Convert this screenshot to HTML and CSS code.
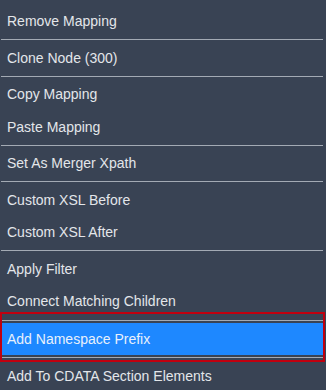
FILE: index.html
```html
<!DOCTYPE html>
<html>
<head>
<meta charset="utf-8">
<link rel="stylesheet" href="styles.css">
</head>
<body>
<ul class="menu">
  <li class="item">Remove Mapping</li>
  <li class="sep"></li>
  <li class="item">Clone Node (300)</li>
  <li class="sep"></li>
  <li class="item">Copy Mapping</li>
  <li class="item">Paste Mapping</li>
  <li class="sep"></li>
  <li class="item">Set As Merger Xpath</li>
  <li class="sep"></li>
  <li class="item">Custom XSL Before</li>
  <li class="item">Custom XSL After</li>
  <li class="sep"></li>
  <li class="item">Apply Filter</li>
  <li class="item">Connect Matching Children</li>
  <li class="sep sep-focus"></li>
  <li class="item active">Add Namespace Prefix<span class="focus-ring"></span></li>
  <li class="sep sep-focus"></li>
  <li class="item">Add To CDATA Section Elements</li>
</ul>
</body>
</html>
```
FILE: styles.css
```css
html, body {
  margin: 0;
  padding: 0;
  background: #394354;
  width: 326px;
  height: 390px;
  overflow: hidden;
}
.menu {
  list-style: none;
  margin: 0;
  padding: 5px 3px 0 1px;
  font-family: "Liberation Sans", Arial, sans-serif;
  font-size: 14px;
  color: #e3e6ea;
}
.item {
  position: relative;
  height: 32.5px;
  line-height: 32.5px;
  padding-left: 6px;
  white-space: nowrap;
}
.sep {
  height: 1px;
  margin: 1.5px 0;
  background: #a3aab4;
}
.sep-focus {
  margin: 2px 0;
}
.active {
  background: #1e88ff;
  color: #e8f0fb;
  height: 32px;
  line-height: 32px;
}
.focus-ring {
  position: absolute;
  left: -1px;
  right: -2px;
  top: -11px;
  bottom: -7px;
  border: 2px solid #c0000f;
  pointer-events: none;
}
```
